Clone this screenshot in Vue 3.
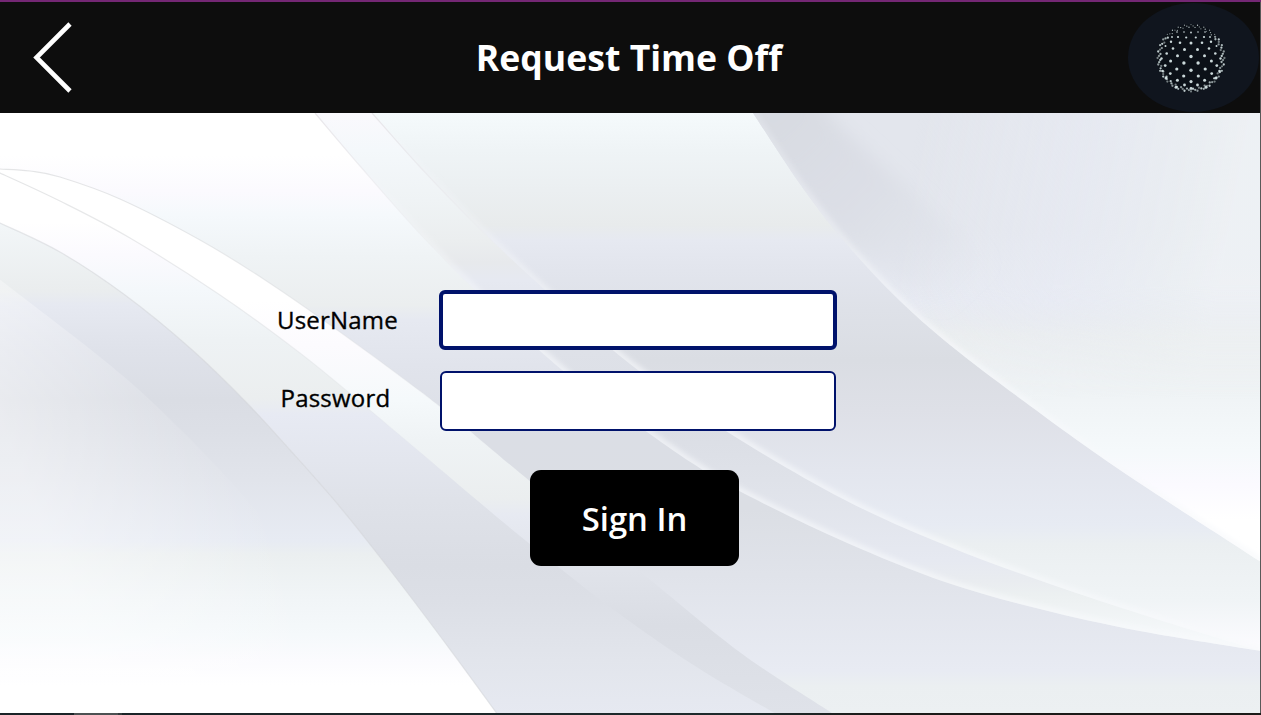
<script setup>
import { ref } from 'vue'

const username = ref('')
const password = ref('')

// Smooth curve through a list of points (Catmull-Rom to cubic Bezier)
function curve(pts) {
  let d = `M${pts[0][0]} ${pts[0][1]}`
  for (let i = 0; i < pts.length - 1; i++) {
    const a = pts[i - 1] || pts[i]
    const b = pts[i]
    const c = pts[i + 1]
    const e = pts[i + 2] || c
    d += `C${b[0] + (c[0] - a[0]) / 6} ${b[1] + (c[1] - a[1]) / 6} ${c[0] - (e[0] - b[0]) / 6} ${c[1] - (e[1] - b[1]) / 6} ${c[0]} ${c[1]}`
  }
  return d
}

const upper = [
  { id: 'r1', pts: [[315, 113], [360, 166], [420, 234], [475, 290], [562, 370], [640, 427], [692, 463], [745, 494], [845, 542], [945, 582], [1040, 609], [1140, 631], [1261, 651]],
    stops: [[113, '#faf9fd'], [150, '#f4f8fb'], [200, '#eff3f5'], [240, '#ebeeef'], [262, '#e7e9ec'], [280, '#e6e9f1'], [350, '#dee1e8'], [430, '#dbdee5'], [480, '#dfe2e9'], [560, '#e6e9f1'], [580, '#e9ecf0'], [595, '#ecf0f1'], [640, '#f6f9fb']] },
  { id: 'r2', pts: [[372, 113], [420, 167], [480, 229], [545, 290], [630, 364], [726, 431], [845, 500], [950, 547], [1050, 584], [1150, 617], [1261, 651]],
    stops: [[113, '#f5fafc'], [150, '#eff4f6'], [190, '#ebeff1'], [225, '#e8ebec'], [240, '#e6e9f1'], [270, '#e2e5ed'], [310, '#dee1e8'], [360, '#dadde3'], [410, '#dee0e7'], [470, '#e3e6ee'], [525, '#e7ebf3'], [545, '#ebeff1'], [600, '#f0f4f6'], [645, '#fbfbfe']] },
  { id: 'r3', pts: [[753, 113], [800, 184], [843, 240], [895, 296], [950, 345], [1025, 402], [1120, 470], [1261, 562]],
    stops: [[113, '#e3e6ed'], [230, '#e3e6ed'], [300, '#e7eaf2'], [318, '#e8ebf0'], [335, '#ebeeef'], [400, '#f0f4f6'], [450, '#f5f9fb'], [485, '#fbfaff'], [520, '#ffffff']] }
]

const lower = [
  { id: 'l1', line: 'url(#crease)', pts: [[-30, 168], [0, 169], [30, 171], [60, 177], [120, 199], [200, 240], [265, 280], [340, 332], [420, 391], [465, 427], [520, 473], [600, 538], [665, 592], [745, 656], [835, 715]],
    stops: [[300, '#ffffff'], [345, '#fcfbfe'], [400, '#f5f9fb'], [440, '#eff3f5'], [498, '#ebeeef'], [515, '#e7eaf2'], [570, '#e0e3ea'], [625, '#dadde4'], [713, '#dfe2e9']] },
  { id: 'l2', line: 'url(#crease)', pts: [[-30, 160], [0, 173], [60, 201], [130, 238], [220, 295], [300, 353], [365, 406], [433, 463], [520, 536], [610, 607], [695, 666], [778, 715]],
    stops: [[222, '#ffffff'], [255, '#fbfafe'], [290, '#f4f8fb'], [340, '#eef2f4'], [398, '#ebeeef'], [415, '#e7eaf3'], [460, '#e3e6ee'], [500, '#dfe2e9'], [565, '#dadde4'], [600, '#dcdfe6'], [660, '#e2e5ec'], [713, '#e6e9f1']] },
  { id: 'l3', line: '#d3d5d8', pts: [[-30, 210], [0, 223], [60, 252], [125, 295], [190, 348], [245, 401], [290, 450], [340, 507], [390, 570], [443, 640], [498, 715]],
    stops: [[225, '#f2f6f8'], [290, '#eaedee'], [305, '#e6e9f1'], [350, '#dfe2ea'], [400, '#dadde4'], [430, '#dcdfe6'], [480, '#e1e4eb'], [540, '#e7ebf3'], [555, '#ebeff0'], [600, '#f1f5f7'], [635, '#f5f9fb'], [660, '#fbfbfe'], [685, '#ffffff']] }
]

const fold = curve([[-1, 279], [50, 318], [100, 357], [150, 400], [220, 470], [300, 560]]) + 'L300 713H0Z'

// Front dots of the globe: offset from the centre, radius; each is mirrored
const front = [
  [0, -15, 1.5], [0, -1.5, 1.7], [0, 12.3, 1.7], [0, 23.6, 1.6], [0, 30.5, 1.4], [0, -25.5, 0.9],
  [7.1, 5, 1.7], [6.5, -8.5, 1.5], [11, -15.2, 1.3], [13.5, -2.2, 1.5], [4.8, -20.5, 1.1], [7.3, 18, 1.6],
  [14.2, 11, 1.6], [20.4, 3, 1.5], [18, -9.5, 1.3], [20, -16.2, 1.2], [24.3, -4.5, 1.3], [13.6, 22.2, 1.5],
  [20.7, 15.6, 1.4], [25.8, 7.6, 1.4], [13, -21, 1.1], [6.5, 27, 1.4], [15, 29.2, 1.5], [25, 20, 1.5],
  [28.5, 13, 1.3], [29.5, 0.5, 1.2], [25.5, -12, 1], [7, -26, 0.8], [14, -26, 0.8], [19, -21, 0.9]
]
const dots = front.flatMap(([x, y, r]) => (x ? [[x, y, r, 0.92], [-x, y, r, 0.92]] : [[x, y, r, 0.92]]))
for (let i = 0; i < 96; i++) {
  const a = (i / 96) * Math.PI * 2
  const rad = 33.4 - (i % 3) * 1.3
  dots.push([Math.cos(a) * rad, Math.sin(a) * rad, Math.sin(a) < -0.7 ? 0.65 : 1.15, 0.5 + (i % 4) * 0.12])
}
</script>

<template>
  <div class="screen">
    <svg class="backdrop" viewBox="0 113 1261 600" preserveAspectRatio="none" aria-hidden="true">
      <defs>
        <linearGradient id="base" gradientUnits="userSpaceOnUse" x1="0" y1="113" x2="0" y2="713">
          <stop offset="0.07" stop-color="#ffffff" />
          <stop offset="0.13" stop-color="#fbfafe" />
          <stop offset="0.17" stop-color="#f5f9fc" />
          <stop offset="0.24" stop-color="#eff3f5" />
          <stop offset="0.32" stop-color="#ebeeef" />
          <stop offset="0.345" stop-color="#e6e9f1" />
          <stop offset="0.42" stop-color="#e1e4ec" />
          <stop offset="0.54" stop-color="#dbdee5" />
          <stop offset="0.66" stop-color="#dbdee4" />
          <stop offset="0.77" stop-color="#e0e3ea" />
          <stop offset="0.93" stop-color="#e8ebf3" />
          <stop offset="0.955" stop-color="#ebeff1" />
          <stop offset="1" stop-color="#ecf0f2" />
        </linearGradient>
        <template v-for="b in [...upper, ...lower]" :key="b.id">
          <linearGradient :id="b.id" gradientUnits="userSpaceOnUse" x1="0" y1="113" x2="0" y2="713">
            <stop v-for="s in b.stops" :key="s[0]" :offset="(s[0] - 113) / 600" :stop-color="s[1]" />
          </linearGradient>
        </template>
        <clipPath v-for="b in upper" :id="'clip-' + b.id" :key="b.id">
          <path :d="curve(b.pts) + 'V113Z'" />
        </clipPath>
        <linearGradient id="crease" gradientUnits="userSpaceOnUse" x1="0" y1="160" x2="0" y2="480">
          <stop offset="0" stop-color="#cdcfd1" />
          <stop offset="0.5" stop-color="#d8dadd" stop-opacity="0.8" />
          <stop offset="1" stop-color="#e0e2e5" stop-opacity="0" />
        </linearGradient>
        <linearGradient id="ridge" gradientUnits="userSpaceOnUse" x1="0" y1="113" x2="0" y2="260">
          <stop offset="0" stop-color="#e6e4e8" stop-opacity="0.9" />
          <stop offset="1" stop-color="#e6e6ea" stop-opacity="0" />
        </linearGradient>
        <linearGradient id="glow" gradientUnits="userSpaceOnUse" x1="0" y1="113" x2="0" y2="713">
          <stop offset="0" stop-color="#f4f6f9" stop-opacity="0.2" />
          <stop offset="0.2" stop-color="#f4f6f9" stop-opacity="0.4" />
          <stop offset="0.4" stop-color="#f7f9fc" stop-opacity="0.65" />
          <stop offset="1" stop-color="#f8fafc" stop-opacity="0.65" />
        </linearGradient>
        <linearGradient id="sheen" gradientUnits="userSpaceOnUse" x1="940" y1="0" x2="1261" y2="60">
          <stop offset="0" stop-color="#eceff5" stop-opacity="0" />
          <stop offset="0.5" stop-color="#e9ecf5" stop-opacity="0.5" />
          <stop offset="0.85" stop-color="#ecf0f3" stop-opacity="0.75" />
          <stop offset="1" stop-color="#eff2f5" stop-opacity="0.85" />
        </linearGradient>
        <linearGradient id="sheenFade" gradientUnits="userSpaceOnUse" x1="0" y1="113" x2="0" y2="400">
          <stop offset="0.6" stop-color="#fff" />
          <stop offset="1" stop-color="#000" />
        </linearGradient>
        <mask id="sheenMask" maskUnits="userSpaceOnUse" x="700" y="113" width="561" height="300"><rect x="700" y="113" width="561" height="300" fill="url(#sheenFade)" /></mask>
        <linearGradient id="shade" gradientUnits="userSpaceOnUse" x1="790" y1="120" x2="960" y2="300">
          <stop offset="0" stop-color="#d7dae1" stop-opacity="0.9" />
          <stop offset="0.45" stop-color="#d8dbe3" stop-opacity="0.65" />
          <stop offset="1" stop-color="#dde0e8" stop-opacity="0" />
        </linearGradient>
        <linearGradient id="haze" gradientUnits="userSpaceOnUse" x1="0" y1="420" x2="200" y2="340">
          <stop offset="0" stop-color="#ffffff" stop-opacity="0.42" />
          <stop offset="1" stop-color="#ffffff" stop-opacity="0" />
        </linearGradient>
        <filter id="soft" filterUnits="userSpaceOnUse" x="250" y="60" width="1060" height="680"><feGaussianBlur stdDeviation="2.6" /></filter>
        <filter id="shadow" filterUnits="userSpaceOnUse" x="650" y="20" width="500" height="440"><feGaussianBlur stdDeviation="9" /></filter>
      </defs>

      <rect y="113" width="1261" height="600" fill="url(#base)" />
      <g v-for="b in upper" :key="b.id">
        <path :d="curve(b.pts) + 'V113Z'" :fill="`url(#${b.id})`" />
        <path v-if="b.id === 'r3'" :d="curve(b.pts) + 'V113Z'" fill="url(#sheen)" mask="url(#sheenMask)" />
        <g :clip-path="`url(#clip-${b.id})`">
          <path v-if="b.id === 'r3'" d="M710 70H790L842 128L915 195L1000 270L960 320L850 250L770 165Z" fill="url(#shade)" filter="url(#shadow)" />
          <path :d="curve(b.pts)" fill="none" stroke="url(#glow)" stroke-width="8" filter="url(#soft)" />
        </g>
        <path v-if="b.id !== 'r3'" :d="curve(b.pts)" fill="none" stroke="url(#ridge)" stroke-width="1.3" />
      </g>
      <g v-for="b in lower" :key="b.id">
        <path :d="curve(b.pts) + 'H-30Z'" :fill="`url(#${b.id})`" />
        <path :d="curve(b.pts)" fill="none" :stroke="b.line" stroke-width="1.2" opacity="0.55" />
      </g>
      <path :d="fold" fill="url(#haze)" />
    </svg>

    <header class="bar">
      <button class="back" aria-label="Back">
        <svg width="44" height="72" viewBox="0 0 44 72"><path d="M39 3L5.5 36.5L39 70" fill="none" stroke="#fff" stroke-width="4.6" /></svg>
      </button>
      <h1>Request Time Off</h1>
      <svg class="logo" width="132" height="111" viewBox="0 0 132 111" aria-hidden="true">
        <ellipse cx="65.5" cy="55.5" rx="65.5" ry="54.5" fill="#10151e" />
        <circle cx="63" cy="56" r="34" fill="#0c1118" />
        <circle v-for="(d, i) in dots" :key="i" :cx="63 + d[0]" :cy="56 + d[1]" :r="d[2]" fill="#dbe9ea" :opacity="d[3]" />
      </svg>
    </header>

    <form class="form" @submit.prevent>
      <label class="label user" for="username">UserName</label>
      <input id="username" v-model="username" class="field active" type="text" />
      <label class="label pass" for="password">Password</label>
      <input id="password" v-model="password" class="field" type="password" />
      <button class="submit" type="submit">Sign In</button>
    </form>

    <div class="edge"></div>
    <div class="base"><span class="thumb"></span></div>
  </div>
</template>

<style>
body { margin: 0; overflow: hidden; }
</style>

<style scoped>
.screen {
  position: relative;
  width: 1261px;
  height: 715px;
  box-sizing: border-box;
  overflow: hidden;
  border-top: 2px solid #742774;
  font-family: "Open Sans", "Noto Sans", sans-serif;
}
.backdrop { position: absolute; left: 0; top: 111px; width: 1261px; height: 600px; }
.bar {
  position: relative;
  display: grid;
  grid-template-columns: 132px 1fr 132px;
  align-items: center;
  box-sizing: border-box;
  height: 111px;
  padding-right: 1px;
  background: #0d0d0d;
}
.back { justify-self: start; margin: -1px 0 0 31px; padding: 0; border: 0; background: none; height: 72px; }
.back svg, .logo { display: block; }
h1 {
  margin: 0;
  padding: 0 2px 2px 0;
  text-align: center;
  color: #fff;
  font-size: 35.6px;
  line-height: 50px;
  font-weight: 700;
  white-space: nowrap;
}
.form {
  position: relative;
  display: grid;
  grid-template-columns: 122px 398px;
  column-gap: 40px;
  width: 560px;
  margin: 177px 0 0 277px;
}
.label {
  font-size: 24px;
  line-height: 60px;
  font-weight: 500;
  letter-spacing: 0.2px;
  color: #000;
  -webkit-text-stroke: 0.35px #000;
}
.pass { margin: 18px 0 0 3.5px; }
.field {
  box-sizing: border-box;
  width: 396px;
  height: 60px;
  margin: 21px 0 0 1px;
  padding: 0 14px;
  border: 2px solid #00126b;
  border-radius: 6px;
  background: #fff;
  font: 24px "Open Sans", sans-serif;
  outline: none;
}
.active { width: 398px; margin: 0; border-width: 4px; }
.submit {
  grid-column: 1 / -1;
  width: 209px;
  height: 96.5px;
  margin: 38.7px 0 0 253px;
  padding: 2px 0 0;
  border: 0;
  border-radius: 11px;
  background: #000;
  color: #fff;
  font: 600 32.8px "Open Sans", sans-serif;
}
.edge { position: absolute; right: 0; top: 0; width: 1px; height: 711px; background: #595959; }
.base { position: absolute; left: 0; bottom: 0; width: 1261px; height: 2px; background: linear-gradient(90deg, #1a2327, #1e2a2c 60%, #1b1a18 70%); }
.thumb { display: block; width: 44px; height: 2px; margin-left: 74px; background: #4c5152; border-right: 4px solid #33393b; }
</style>
